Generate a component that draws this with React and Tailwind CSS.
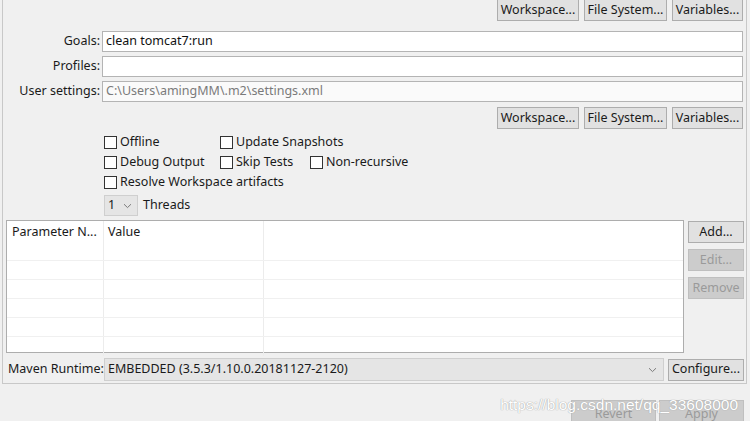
import React from "react";

const font = { fontFamily: '"Noto Sans", "Open Sans", sans-serif' };

// plain windows-ish push button
const Btn = ({ w, h = 22, children, disabled }) => (
  <button
    className={
      "shrink-0 border text-[12.5px] leading-none " +
      (disabled
        ? "border-[#bfbfbf] bg-[#cccccc] text-[#9a9a9a]"
        : "border-[#adadad] bg-[#e1e1e1] text-[#1a1a1a]")
    }
    style={{ width: w, height: h }}
  >
    {children}
  </button>
);

const Check = ({ label, w }) => (
  <label className="flex shrink-0 items-center gap-[3px]" style={{ width: w }}>
    <span className="h-[13px] w-[13px] border border-[#333333] bg-white" />
    <span>{label}</span>
  </label>
);

const Field = ({ label, value, muted }) => (
  <div className="flex items-center">
    <span className="w-[99px] shrink-0 pr-[2px] text-right">{label}</span>
    <div
      className={
        "flex h-[21px] w-[641px] items-center border border-[#b4b4b4] px-[3px] " +
        (muted ? "bg-[#fafafa] text-[#7a7a7a]" : "bg-white text-[#111111]")
      }
    >
      {value}
    </div>
  </div>
);

const Chevron = () => (
  <svg width="9" height="6" viewBox="0 0 9 6" fill="none">
    <path d="M1 1.2 L4.5 4.6 L8 1.2" stroke="#7a7a7a" strokeWidth="1" />
  </svg>
);

const BrowseRow = () => (
  <div className="flex justify-end gap-[5px] pr-[3px]">
    <Btn w={82}>Workspace...</Btn>
    <Btn w={83}>File System...</Btn>
    <Btn w={71}>Variables...</Btn>
  </div>
);

export default function App() {
  const rows = [0, 1, 2, 3, 4];
  return (
    <div
      className="h-[421px] w-[750px] overflow-hidden bg-[#f0f0f0] text-[12.5px] text-[#1a1a1a]"
      style={font}
    >
      {/* main panel, top edge is cut off */}
      <div className="ml-[2px] h-[385px] w-[745px] border-x border-b border-[#c8c8c8]">
        <div className="-mt-[1px]">
          <BrowseRow />
        </div>

        <div className="mt-[10px] flex flex-col gap-[4px]">
          <Field label="Goals:" value="clean tomcat7:run" />
          <Field label="Profiles:" value="" />
          <Field label="User settings:" value="C:\Users\amingMM\.m2\settings.xml" muted />
        </div>

        <div className="mt-[5px]">
          <BrowseRow />
        </div>

        {/* options */}
        <div className="ml-[101px] mt-[3px] flex flex-col">
          <div className="flex h-[20px] items-center">
            <Check label="Offline" w={116} />
            <Check label="Update Snapshots" />
          </div>
          <div className="flex h-[20px] items-center">
            <Check label="Debug Output" w={116} />
            <Check label="Skip Tests" w={90} />
            <Check label="Non-recursive" />
          </div>
          <div className="flex h-[20px] items-center">
            <Check label="Resolve Workspace artifacts" />
          </div>
          <div className="mt-[3px] flex items-center gap-[5px]">
            <div className="flex h-[21px] w-[34px] items-center justify-between border border-[#cfcfcf] bg-[#e5e5e5] pl-[3px] pr-[5px]">
              <span>1</span>
              <Chevron />
            </div>
            <span>Threads</span>
          </div>
        </div>

        {/* parameters table + buttons */}
        <div className="mt-[4px] flex">
          <div className="ml-[3px] h-[133px] w-[678px] border border-[#adadad] bg-white">
            <div className="flex h-[40px] border-b border-[#f0f0f0]">
              <div className="w-[97px] border-r border-[#ececec] pl-[5px] pt-[2px]">Parameter N...</div>
              <div className="w-[160px] border-r border-[#ececec] pl-[4px] pt-[2px]">Value</div>
              <div className="flex-1" />
            </div>
            {rows.map((r) => (
              <div key={r} className="flex h-[19px] border-b border-[#f0f0f0] last:border-b-0">
                <div className="w-[97px] border-r border-[#ececec]" />
                <div className="w-[160px] border-r border-[#ececec]" />
                <div className="flex-1" />
              </div>
            ))}
          </div>
          <div className="ml-[4px] flex flex-col gap-[6px] pt-[1px]">
            <Btn w={56}>Add...</Btn>
            <Btn w={56} disabled>Edit...</Btn>
            <Btn w={56} disabled>Remove</Btn>
          </div>
        </div>

        {/* maven runtime */}
        <div className="mt-[5px] flex items-center">
          <span className="w-[101px] shrink-0 pl-[5px]">Maven Runtime:</span>
          <div className="flex h-[23px] w-[560px] items-center justify-between border border-[#cfcfcf] bg-[#e5e5e5] pl-[3px] pr-[6px]">
            <span>EMBEDDED (3.5.3/1.10.0.20181127-2120)</span>
            <Chevron />
          </div>
          <div className="ml-[4px]">
            <Btn w={76}>Configure...</Btn>
          </div>
        </div>
      </div>

      {/* dialog footer */}
      <div className="relative mt-[16px] flex justify-end gap-[3px] pr-[6px]">
        <Btn w={85} h={28} disabled>Revert</Btn>
        <Btn w={85} h={28} disabled>Apply</Btn>
        <span
          className="absolute right-[12px] top-[-7px] text-[15.5px] text-white"
          style={{ fontFamily: '"Liberation Sans", sans-serif', textShadow: "0 0 1px #a8a8a8, 0 0 1px #a8a8a8" }}
        >
          https://blog.csdn.net/qq_33608000
        </span>
      </div>
    </div>
  );
}
